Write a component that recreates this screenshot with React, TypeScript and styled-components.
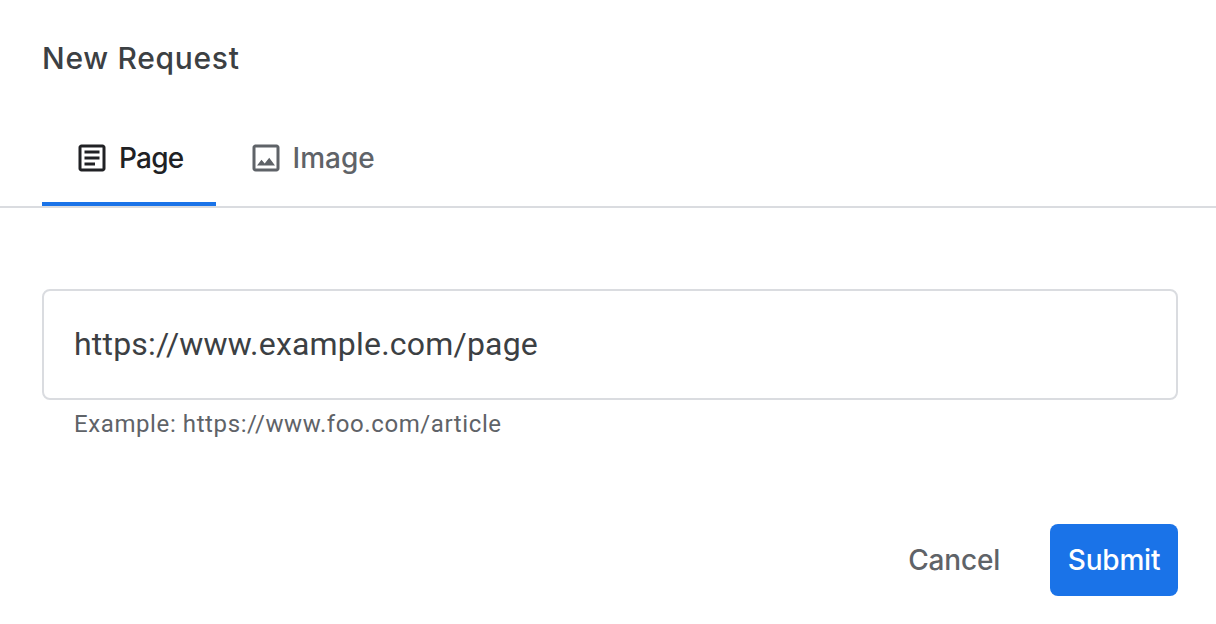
import styled, { createGlobalStyle } from "styled-components";

const GlobalStyle = createGlobalStyle`
  html, body {
    margin: 0;
    padding: 0;
    background: #fff;
  }
`;

const Dialog = styled.div`
  width: 1216px;
  height: 624px;
  overflow: hidden;
  display: flex;
  flex-direction: column;
  font-family: Roboto, "Liberation Sans", sans-serif;
`;

const Title = styled.h1`
  margin: 0;
  padding: 38px 42px 0;
  height: 40px;
  font-family: Inter, Roboto, sans-serif;
  font-size: 30px;
  line-height: 40px;
  font-weight: 500;
  letter-spacing: 0.7px;
  color: #3c4043;
`;

const TabBar = styled.div`
  display: flex;
  margin-top: 32px;
  padding: 0 42px;
  height: 98px;
  box-sizing: border-box;
  border-bottom: 2px solid #dadce0;
`;

const Tab = styled.div<{ $active?: boolean }>`
  display: flex;
  align-items: center;
  gap: 9px;
  height: 96px;
  box-sizing: border-box;
  padding: 4px 32px 0;
  font-family: Inter, Roboto, sans-serif;
  font-size: 28px;
  font-weight: 500;
  letter-spacing: ${(p) => (p.$active ? "-0.75px" : "0")};
  color: ${(p) => (p.$active ? "#202124" : "#5f6368")};
  border-bottom: 4px solid ${(p) => (p.$active ? "#1a73e8" : "transparent")};
`;

const TabIcon = styled.svg`
  width: 36px;
  height: 36px;
  fill: currentColor;
  flex: none;
`;

const Body = styled.div`
  padding: 81px 38px 0 42px;
`;

const Field = styled.div`
  height: 111px;
  box-sizing: border-box;
  padding: 0 30px 2px;
  display: flex;
  align-items: center;
  border: 2px solid #dadce0;
  border-radius: 8px;
  font-size: 32px;
  letter-spacing: 0.2px;
  color: #3c4043;
`;

const Hint = styled.div`
  margin-top: 9px;
  padding-left: 32px;
  font-size: 24px;
  line-height: 30px;
  letter-spacing: 0.6px;
  color: #5f6368;
`;

const Actions = styled.div`
  display: flex;
  justify-content: flex-end;
  align-items: center;
  gap: 50px;
  margin-top: 85px;
  padding-right: 38px;
`;

const CancelButton = styled.button`
  border: 0;
  padding: 0;
  background: none;
  font-family: Inter, Roboto, sans-serif;
  font-size: 28px;
  font-weight: 500;
  letter-spacing: -0.2px;
  color: #5f6368;
`;

const SubmitButton = styled.button`
  width: 128px;
  height: 72px;
  border: 0;
  border-radius: 8px;
  background: #1a73e8;
  font-family: Inter, Roboto, sans-serif;
  font-size: 28px;
  font-weight: 500;
  letter-spacing: -0.2px;
  color: #fff;
`;

export default function App() {
  return (
    <Dialog>
      <GlobalStyle />
      <Title>New Request</Title>
      <TabBar>
        <Tab $active>
          <TabIcon viewBox="0 0 24 24">
            <path d="M19 5v14H5V5h14m0-2H5c-1.1 0-2 .9-2 2v14c0 1.1.9 2 2 2h14c1.1 0 2-.9 2-2V5c0-1.1-.9-2-2-2z" />
            <path d="M14 17H7v-2h7v2zm3-4H7v-2h10v2zm0-4H7V7h10v2z" />
          </TabIcon>
          Page
        </Tab>
        <Tab>
          <TabIcon viewBox="0 0 24 24">
            <path d="M19 5v14H5V5h14m0-2H5c-1.1 0-2 .9-2 2v14c0 1.1.9 2 2 2h14c1.1 0 2-.9 2-2V5c0-1.1-.9-2-2-2zm-4.86 8.86l-3 3.87L9 13.14 6 17h12l-3.86-5.14z" />
          </TabIcon>
          Image
        </Tab>
      </TabBar>
      <Body>
        <Field>https://www.example.com/page</Field>
        <Hint>Example: https://www.foo.com/article</Hint>
      </Body>
      <Actions>
        <CancelButton>Cancel</CancelButton>
        <SubmitButton>Submit</SubmitButton>
      </Actions>
    </Dialog>
  );
}
